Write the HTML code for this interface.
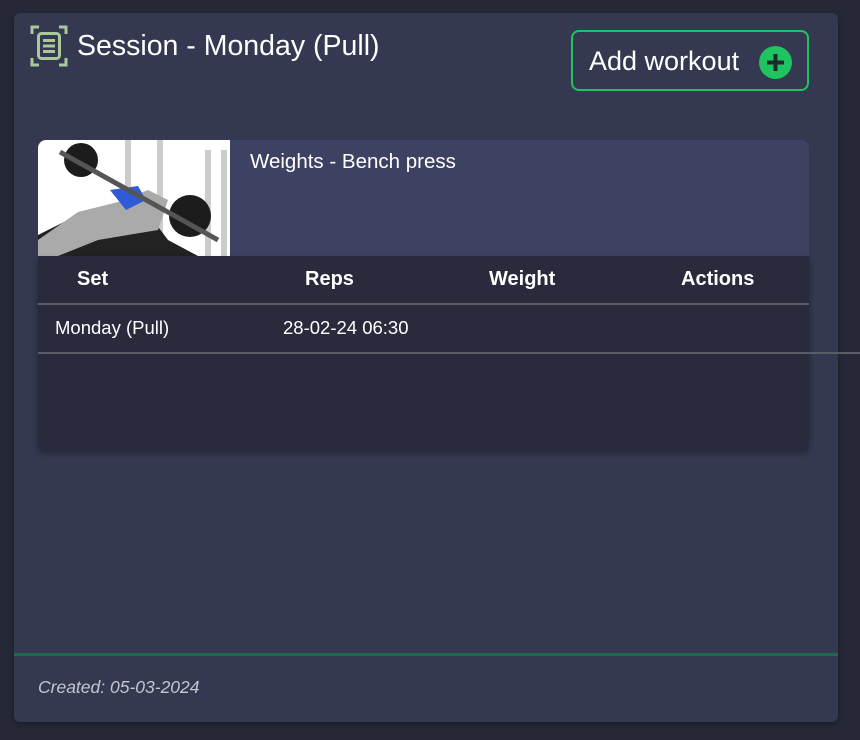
<!DOCTYPE html>
<html><head><meta charset="utf-8"><style>
*{margin:0;padding:0;box-sizing:border-box}
body{width:860px;height:740px;background:#262837;font-family:"Liberation Sans",sans-serif;color:#fff;position:relative;overflow:hidden}
.card{position:absolute;left:14px;top:13px;width:824px;height:709px;background:#343850;border-radius:6px;box-shadow:0 2px 6px rgba(0,0,0,.35)}
.abs{position:absolute}
.title{left:77px;top:30px;font-size:28.5px;white-space:nowrap}
.btn{left:571px;top:30px;width:238px;height:61px;border:2px solid #1fc35f;border-radius:8px}
.btn span{position:absolute;left:16px;top:14px;font-size:27px;white-space:nowrap}
.plus{position:absolute;left:186px;top:14px;width:33px;height:33px;border-radius:50%;background:#1fc35f}
.top{left:38px;top:140px;width:771px;height:116px;background:#3e4262;border-radius:8px 8px 0 0;overflow:hidden}
.tbl{left:38px;top:256px;width:771px;height:194px;background:#292b3d;border-radius:0 0 6px 6px;box-shadow:0 3px 6px rgba(0,0,0,.3)}
.th{position:absolute;top:12px;font-size:20px;font-weight:bold;white-space:nowrap}
.td{position:absolute;top:61px;font-size:18.5px;white-space:nowrap}
.line{position:absolute;height:2px;background:#5a5c68}
</style></head><body>
<div class="card"></div>
<svg class="abs" style="left:30px;top:25px" width="38" height="42" viewBox="0 0 38 42">
<g fill="none" stroke="#a9c99a" stroke-width="3">
<path d="M2 9V2H9M29 2H36V9M36 33V40H29M9 40H2V33"/>
<rect x="8.5" y="8.5" width="21" height="25" rx="3"/>
</g>
<g fill="#a9c99a"><rect x="13" y="14" width="12" height="3"/><rect x="13" y="19.5" width="12" height="3"/><rect x="13" y="25" width="12" height="3"/></g>
</svg>
<div class="abs title">Session - Monday (Pull)</div>
<div class="abs btn"><span>Add workout</span><div class="plus"><svg width="33" height="33"><path d="M16.5 8v17M8 16.5h17" stroke="#1d2a2a" stroke-width="4"/></svg></div></div>
<div class="abs top">
<svg width="192" height="116" viewBox="0 0 192 116" style="position:absolute;left:0;top:0">
<rect width="192" height="116" fill="#fff"/>
<g stroke="#ccc" stroke-width="6"><path d="M90 0V116M122 0V116M170 10V116M186 10V116"/></g>
<path d="M0 116L0 95L50 70L100 60L130 100L160 116Z" fill="#222"/>
<path d="M0 100L40 72L80 62L110 50L130 60L120 90L60 100L20 116H0Z" fill="#aaa"/>
<path d="M72 50L100 46L108 60L88 70Z" fill="#2f5ad8"/>
<circle cx="43" cy="20" r="17" fill="#1c1c1c"/>
<circle cx="152" cy="76" r="21" fill="#1c1c1c"/>
<path d="M22 12L180 100" stroke="#555" stroke-width="5"/>
</svg>
<div style="position:absolute;left:212px;top:10px;font-size:20.5px;white-space:nowrap">Weights - Bench press</div>
</div>
<div class="abs tbl">
<div class="th" style="left:39px">Set</div>
<div class="th" style="left:267px">Reps</div>
<div class="th" style="left:451px">Weight</div>
<div class="th" style="left:643px">Actions</div>
<div class="line" style="left:0;top:47px;width:771px"></div>
<div class="td" style="left:17px">Monday (Pull)</div>
<div class="td" style="left:245px">28-02-24 06:30</div>
<div class="line" style="left:0;top:96px;width:822px"></div>
</div>
<div class="abs" style="left:14px;top:653px;width:824px;height:3px;background:#1e6a4e"></div>
<div class="abs" style="left:38px;top:677px;font-size:17.5px;font-style:italic;color:#c4c6d0;white-space:nowrap">Created: 05-03-2024</div>
</body></html>
